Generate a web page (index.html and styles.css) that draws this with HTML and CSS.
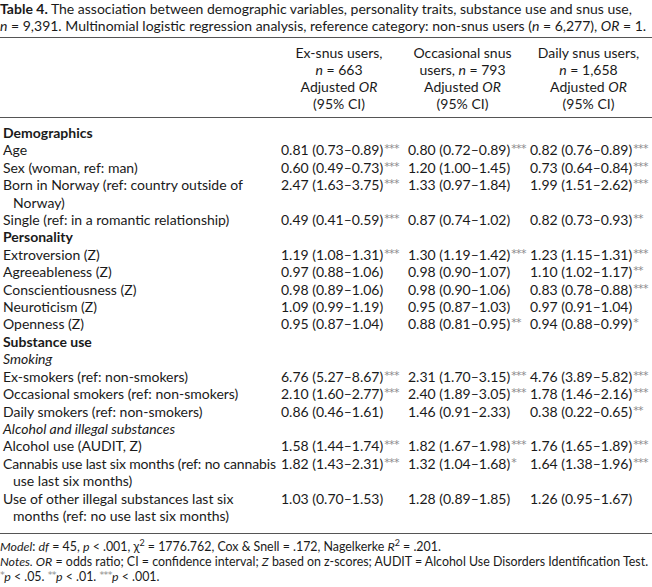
FILE: index.html
```html
<!DOCTYPE html>
<html>
<head>
<meta charset="utf-8">
<link rel="stylesheet" href="styles.css">
</head>
<body>
<div class="page">
  <p class="caption"><b>Table 4.</b> The association between demographic variables, personality traits, substance use and snus use,<br><i>n</i> = 9,391. Multinomial logistic regression analysis, reference category: non-snus users (<i>n</i> = 6,277), <i>OR</i> = 1.</p>
  <table class="tbl">
    <colgroup>
      <col class="c-label"><col class="c-v1"><col class="c-v2"><col class="c-v3">
    </colgroup>
    <thead>
      <tr>
        <th></th>
        <th>Ex-snus users,<br><i>n</i> = 663<br>Adjusted <i>OR</i><br>(95% CI)</th>
        <th>Occasional snus<br>users, <i>n</i> = 793<br>Adjusted <i>OR</i><br>(95% CI)</th>
        <th>Daily snus users,<br><i>n</i> = 1,658<br>Adjusted <i>OR</i><br>(95% CI)</th>
      </tr>
    </thead>
    <tbody>
      <tr><td class="sec" colspan="4">Demographics</td></tr>
      <tr><td class="lbl">Age</td><td>0.81 (0.73–0.89)<sup>***</sup></td><td>0.80 (0.72–0.89)<sup>***</sup></td><td>0.82 (0.76–0.89)<sup>***</sup></td></tr>
      <tr><td class="lbl">Sex (woman, ref: man)</td><td>0.60 (0.49–0.73)<sup>***</sup></td><td>1.20 (1.00–1.45)</td><td>0.73 (0.64–0.84)<sup>***</sup></td></tr>
      <tr><td class="lbl">Born in Norway (ref: country outside of<br>Norway)</td><td>2.47 (1.63–3.75)<sup>***</sup></td><td>1.33 (0.97–1.84)</td><td>1.99 (1.51–2.62)<sup>***</sup></td></tr>
      <tr><td class="lbl">Single (ref: in a romantic relationship)</td><td>0.49 (0.41–0.59)<sup>***</sup></td><td>0.87 (0.74–1.02)</td><td>0.82 (0.73–0.93)<sup>**</sup></td></tr>
      <tr><td class="sec" colspan="4">Personality</td></tr>
      <tr><td class="lbl">Extroversion (Z)</td><td>1.19 (1.08–1.31)<sup>***</sup></td><td>1.30 (1.19–1.42)<sup>***</sup></td><td>1.23 (1.15–1.31)<sup>***</sup></td></tr>
      <tr><td class="lbl">Agreeableness (Z)</td><td>0.97 (0.88–1.06)</td><td>0.98 (0.90–1.07)</td><td>1.10 (1.02–1.17)<sup>**</sup></td></tr>
      <tr><td class="lbl">Conscientiousness (Z)</td><td>0.98 (0.89–1.06)</td><td>0.98 (0.90–1.06)</td><td>0.83 (0.78–0.88)<sup>***</sup></td></tr>
      <tr><td class="lbl">Neuroticism (Z)</td><td>1.09 (0.99–1.19)</td><td>0.95 (0.87–1.03)</td><td>0.97 (0.91–1.04)</td></tr>
      <tr><td class="lbl">Openness (Z)</td><td>0.95 (0.87–1.04)</td><td>0.88 (0.81–0.95)<sup>**</sup></td><td>0.94 (0.88–0.99)<sup>*</sup></td></tr>
      <tr><td class="sec" colspan="4">Substance use</td></tr>
      <tr><td class="sub" colspan="4">Smoking</td></tr>
      <tr><td class="lbl">Ex-smokers (ref: non-smokers)</td><td>6.76 (5.27–8.67)<sup>***</sup></td><td>2.31 (1.70–3.15)<sup>***</sup></td><td>4.76 (3.89–5.82)<sup>***</sup></td></tr>
      <tr><td class="lbl">Occasional smokers (ref: non-smokers)</td><td>2.10 (1.60–2.77)<sup>***</sup></td><td>2.40 (1.89–3.05)<sup>***</sup></td><td>1.78 (1.46–2.16)<sup>***</sup></td></tr>
      <tr><td class="lbl">Daily smokers (ref: non-smokers)</td><td>0.86 (0.46–1.61)</td><td>1.46 (0.91–2.33)</td><td>0.38 (0.22–0.65)<sup>**</sup></td></tr>
      <tr><td class="sub" colspan="4">Alcohol and illegal substances</td></tr>
      <tr><td class="lbl">Alcohol use (AUDIT, Z)</td><td>1.58 (1.44–1.74)<sup>***</sup></td><td>1.82 (1.67–1.98)<sup>***</sup></td><td>1.76 (1.65–1.89)<sup>***</sup></td></tr>
      <tr><td class="lbl"><span class="tight">Cannabis use last six months (ref: no cannabis</span><br>use last six months)</td><td>1.82 (1.43–2.31)<sup>***</sup></td><td>1.32 (1.04–1.68)<sup>*</sup></td><td>1.64 (1.38–1.96)<sup>***</sup></td></tr>
      <tr><td class="lbl">Use of other illegal substances last six<br>months (ref: no use last six months)</td><td>1.03 (0.70–1.53)</td><td>1.28 (0.89–1.85)</td><td>1.26 (0.95–1.67)</td></tr>
    </tbody>
  </table>
  <div class="notes">
    <p><i>Model</i>: <i>df</i> = 45, <i>p</i> &lt; .001, χ<sup class="pw">2</sup> = 1776.762, Cox &amp; Snell = .172, Nagelkerke <i>R</i><sup class="pw">2</sup> = .201.</p>
    <p><i>Notes. OR</i> = odds ratio; CI = confidence interval; <i>Z</i> based on z-scores; AUDIT = Alcohol Use Disorders Identification Test.</p>
    <p><sup class="fs">*</sup><i>p</i> &lt; .05. <sup class="fs">**</sup><i>p</i> &lt; .01. <sup class="fs">***</sup><i>p</i> &lt; .001.</p>
  </div>
</div>
</body>
</html>
```

FILE: styles.css
```css
html, body {
  margin: 0;
  padding: 0;
  background: #fff;
}
body {
  font-family: Lato, "Open Sans", sans-serif;
  color: #1a1a1a;
  font-size: 14px;
}
.page {
  width: 652px;
  overflow: hidden;
}
.caption {
  margin: 0;
  line-height: 17px;
  white-space: nowrap;
}
.caption b {
  font-weight: 700;
}
.tbl {
  width: 652px;
  border-collapse: collapse;
  margin-top: 3px;
  table-layout: fixed;
}
.c-label { width: 278px; }
.c-v1 { width: 122px; }
.c-v2 { width: 125px; }
.c-v3 { width: 127px; }
.tbl thead th {
  font-weight: 400;
  text-align: center;
  line-height: 17px;
  padding: 6px 0 5px;
  border-top: 1.5px solid #555;
  border-bottom: 1.5px solid #555;
  white-space: nowrap;
}
.tbl tbody td {
  padding: 0;
  line-height: 17.4px;
  vertical-align: top;
  white-space: nowrap;
}
.tbl tbody tr:first-child td {
  padding-top: 6px;
}
.tbl tbody td:nth-child(2) { padding-left: 3px; }
.tbl tbody td:nth-child(3) { padding-left: 8px; }
.tbl tbody td:nth-child(4) { padding-left: 5px; }
.tbl tbody td.lbl {
  padding-left: 13px;
  text-indent: -10px;
}
.tbl tbody td.lbl .tight {
  letter-spacing: -0.15px;
}
.tbl tbody td.sec {
  font-weight: 700;
  padding-left: 3px;
}
.tbl tbody td.sub {
  font-style: italic;
  padding-left: 3px;
}
.tbl tbody tr:last-child td {
  padding-bottom: 9px;
  border-bottom: 1.5px solid #555;
}
sup {
  font-family: "DejaVu Sans", sans-serif;
  font-size: 11px;
  color: #8c8c8c;
  vertical-align: 3px;
  line-height: 0;
  letter-spacing: -0.6px;
  margin-left: 1px;
}
sup.pw {
  font-family: Lato, sans-serif;
  color: #1a1a1a;
  font-size: 9px;
  vertical-align: 5px;
  letter-spacing: 0;
  margin-left: 0;
}
sup.fs {
  font-size: 9.5px;
  vertical-align: 3px;
  margin-left: 0;
}
.notes {
  padding-top: 5px;
  font-size: 12.4px;
}
.notes p {
  margin: 0;
  line-height: 15px;
  white-space: nowrap;
}
```
